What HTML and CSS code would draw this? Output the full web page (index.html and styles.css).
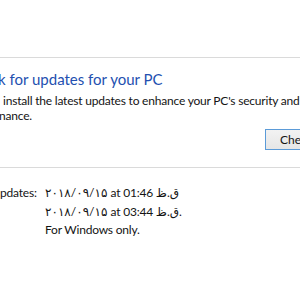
FILE: index.html
```html
<!DOCTYPE html>
<html lang="en">
<head>
    <meta charset="UTF-8">
    <title>Windows Update</title>
    <link rel="stylesheet" href="styles.css">
</head>
<body>
    <div class="window">
        <div class="toolbar"></div>

        <section class="update">
            <h1 class="update-title">k for updates for your PC</h1>
            <p class="update-desc">install the latest updates to enhance your PC's security and<br>nance.</p>
            <div class="actions">
                <button class="check-btn">Check now</button>
            </div>
        </section>

        <div class="info">
            <div class="info-row">
                <span class="info-label">pdates:</span>
                <span class="info-value">۲۰۱۸/۰۹/۱۵ at 01:46 ق.ظ</span>
            </div>
            <div class="info-row">
                <span class="info-label"></span>
                <div class="info-value">
                    <div>۲۰۱۸/۰۹/۱۵ at 03:44 ق.ظ.</div>
                    <div class="info-note">For Windows only.</div>
                </div>
            </div>
        </div>
    </div>
</body>
</html>
```

FILE: styles.css
```css
* {
    margin: 0;
    padding: 0;
    box-sizing: border-box;
}

html, body {
    width: 300px;
    height: 300px;
    overflow: hidden;
}

body {
    background: #ffffff;
    font-family: 'Lato', 'DejaVu Sans', sans-serif;
    font-size: 12px;
    letter-spacing: -0.2px;
    color: #141414;
}

.toolbar {
    height: 58px;
    border-bottom: 1px solid #dadada;
}

.update {
    padding-top: 11px;
    border-bottom: 1px solid #dadada;
    padding-bottom: 17px;
}

.update-title {
    font-size: 15px;
    font-weight: 400;
    letter-spacing: 0;
    color: #2350b0;
    line-height: 20px;
    margin-bottom: 4px;
    margin-left: -2px;
    white-space: nowrap;
}

.update-desc {
    line-height: 15px;
    text-indent: 4px;
    margin-left: -1px;
    white-space: nowrap;
}

.actions {
    display: flex;
    justify-content: flex-end;
    margin-top: 6px;
    margin-right: -60px;
}

.check-btn {
    width: 95px;
    height: 21px;
    border: 1px solid #5b9bd8;
    background: linear-gradient(#f2f2f2, #e6e6e6);
    font-family: inherit;
    font-size: 12px;
    color: #141414;
    text-align: left;
    padding-left: 14px;
}

.info {
    padding-top: 16px;
}

.info-row {
    display: grid;
    grid-template-columns: 34px auto;
    column-gap: 11px;
    line-height: 18px;
    margin-bottom: 1px;
}

.info-label {
    text-align: right;
    white-space: nowrap;
}

.info-value {
    white-space: nowrap;
}

.info-note {
    line-height: 18px;
}
```
